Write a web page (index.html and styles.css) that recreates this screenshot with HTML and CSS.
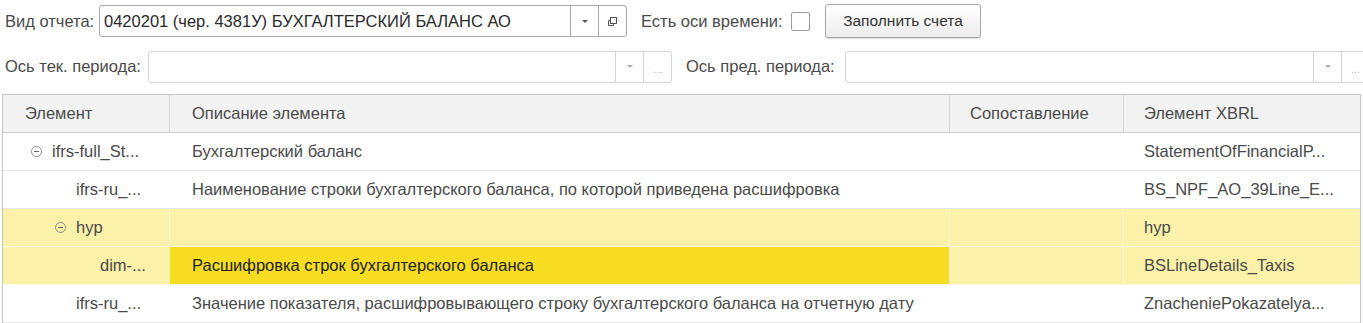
FILE: index.html
```html
<!DOCTYPE html>
<html lang="ru">
<head>
    <meta charset="UTF-8">
    <title>Настройка XBRL</title>
    <link rel="stylesheet" href="styles.css">
</head>
<body>
    <div class="form">
        <div class="toolbar first">
            <span class="label kind-label">Вид отчета:</span>
            <div class="field report-kind">
                <span class="value">0420201 (чер. 4381У) БУХГАЛТЕРСКИЙ БАЛАНС АО</span>
                <span class="field-btn">
                    <svg width="8" height="5" viewBox="0 0 8 5"><path d="M1 1h6L4 4z" fill="#555"/></svg>
                </span>
                <span class="field-btn">
                    <svg width="11" height="11" viewBox="0 0 11 11" fill="none" stroke="#555" stroke-width="1"><rect x="3.5" y="1.5" width="6" height="6"/><path d="M3.5 4.5h-2v5h5v-2"/></svg>
                </span>
            </div>
            <span class="label check-label">Есть оси времени:</span>
            <span class="checkbox"></span>
            <button class="button">Заполнить счета</button>
        </div>

        <div class="toolbar second">
            <span class="label cur-label">Ось тек. периода:</span>
            <div class="field light cur-axis">
                <span class="value"></span>
                <span class="field-btn">
                    <svg width="8" height="5" viewBox="0 0 8 5"><path d="M1 1h6L4 4z" fill="#aaa"/></svg>
                </span>
                <span class="field-btn dots">...</span>
            </div>
            <span class="label prev-label">Ось пред. периода:</span>
            <div class="field light prev-axis">
                <span class="value"></span>
                <span class="field-btn">
                    <svg width="8" height="5" viewBox="0 0 8 5"><path d="M1 1h6L4 4z" fill="#aaa"/></svg>
                </span>
                <span class="field-btn dots">...</span>
            </div>
        </div>

        <div class="grid">
            <div class="row head">
                <div class="cell c1">Элемент</div>
                <div class="cell c2">Описание элемента</div>
                <div class="cell c3">Сопоставление</div>
                <div class="cell c4">Элемент XBRL</div>
            </div>
            <div class="row">
                <div class="cell c1 lvl0"><span class="toggle"></span>ifrs-full_St...</div>
                <div class="cell c2">Бухгалтерский баланс</div>
                <div class="cell c3"></div>
                <div class="cell c4">StatementOfFinancialP...</div>
            </div>
            <div class="row">
                <div class="cell c1 lvl1">ifrs-ru_...</div>
                <div class="cell c2">Наименование строки бухгалтерского баланса, по которой приведена расшифровка</div>
                <div class="cell c3"></div>
                <div class="cell c4">BS_NPF_AO_39Line_E...</div>
            </div>
            <div class="row marked">
                <div class="cell c1 lvl1 open"><span class="toggle"></span>hyp</div>
                <div class="cell c2"></div>
                <div class="cell c3"></div>
                <div class="cell c4">hyp</div>
            </div>
            <div class="row marked">
                <div class="cell c1 lvl2">dim-...</div>
                <div class="cell c2 current">Расшифровка строк бухгалтерского баланса</div>
                <div class="cell c3"></div>
                <div class="cell c4">BSLineDetails_Taxis</div>
            </div>
            <div class="row">
                <div class="cell c1 lvl1">ifrs-ru_...</div>
                <div class="cell c2">Значение показателя, расшифровывающего строку бухгалтерского баланса на отчетную дату</div>
                <div class="cell c3"></div>
                <div class="cell c4">ZnacheniePokazatelya...</div>
            </div>
        </div>
    </div>
</body>
</html>
```

FILE: styles.css
```css
:root {
    --text-color: #4a4a4a;
    --border-color: #a9a9a9;
    --light-border: #d4d4d4;
    --grid-line: #e6e6e6;
    --marked-bg: #fbf1a9;
    --current-bg: #f7dc22;
}

* {
    margin: 0;
    padding: 0;
    box-sizing: border-box;
}

body {
    font-family: Arial, "Liberation Sans", sans-serif;
    font-size: 16.5px;
    color: var(--text-color);
    background: #ffffff;
    width: 1363px;
    height: 323px;
    overflow: hidden;
}

.toolbar {
    display: flex;
    align-items: center;
    white-space: nowrap;
    padding-left: 5px;
}

.toolbar > * {
    flex-shrink: 0;
}

.toolbar.first {
    height: 32px;
    margin-top: 5px;
}

.toolbar.second {
    height: 33px;
    margin-top: 13px;
}

.kind-label {
    width: 94px;
}

.cur-label {
    width: 143px;
}

.field {
    display: flex;
    align-items: stretch;
    height: 32px;
    border: 1px solid var(--border-color);
    border-radius: 3px;
    background: #fff;
}

.field.light {
    border-color: var(--light-border);
}

.field .value {
    flex-grow: 1;
    padding: 0 4px;
    line-height: 30px;
    color: #2a2a2a;
    overflow: hidden;
}

.field-btn {
    width: 28px;
    border-left: 1px solid var(--border-color);
    display: flex;
    align-items: center;
    justify-content: center;
}

.field.light .field-btn {
    border-left-color: var(--light-border);
}

.field-btn.dots {
    color: #b5b5b5;
    font-size: 11px;
    padding-top: 5px;
}

.report-kind {
    width: 528px;
}

.check-label {
    margin-left: 14px;
    width: 150px;
}

.checkbox {
    width: 19px;
    height: 19px;
    border: 1px solid #9c9c9c;
    border-radius: 2px;
    margin-right: 15px;
}

.button {
    font-family: inherit;
    font-size: 15.5px;
    color: #333;
    height: 34px;
    width: 156px;
    border: 1px solid #a8a8a8;
    border-radius: 3px;
    background: linear-gradient(#ffffff, #ececec);
    box-shadow: 0 1px 1px rgba(0, 0, 0, 0.15);
}

.cur-axis {
    width: 524px;
}

.prev-label {
    margin-left: 14px;
    width: 159px;
}

.prev-axis {
    width: 525px;
}

/* table */

.grid {
    margin-top: 11px;
    margin-left: 2px;
    width: 1359px;
    border: 1px solid #c5c5c5;
    border-bottom: none;
}

.row {
    display: grid;
    grid-template-columns: 167px 780px 174px 237px;
    height: 38px;
    border-bottom: 1px solid var(--grid-line);
}

.row.head {
    background: #f2f2f2;
    border-bottom-color: #cdcdcd;
}

.cell {
    display: flex;
    align-items: center;
    padding-left: 20px;
    white-space: nowrap;
    overflow: hidden;
}

.head .cell {
    border-right: 1px solid #d6d6d6;
}

.row .c1 {
    padding-left: 22px;
}

.row .c2 {
    padding-left: 22px;
}

.head .c4 {
    border-right: none;
}

.row .lvl0 {
    padding-left: 28px;
}

.row .lvl1 {
    padding-left: 73px;
}

.row .lvl1.open {
    padding-left: 52px;
}

.row .lvl2 {
    padding-left: 97px;
}

.toggle {
    width: 11px;
    height: 11px;
    border: 1px solid #8c8c8c;
    border-radius: 50%;
    margin-right: 10px;
    position: relative;
}

.toggle::after {
    content: "";
    position: absolute;
    left: 2px;
    right: 2px;
    top: 4px;
    height: 1px;
    background: #666;
}

.row.marked {
    background: var(--marked-bg);
    border-bottom-color: #fdf8d8;
}

.row.marked .cell {
    border-right: 1px solid #fdf6cf;
}

.row.marked .c4 {
    border-right: none;
}

.cell.current {
    background: var(--current-bg);
    color: #222;
}
```
